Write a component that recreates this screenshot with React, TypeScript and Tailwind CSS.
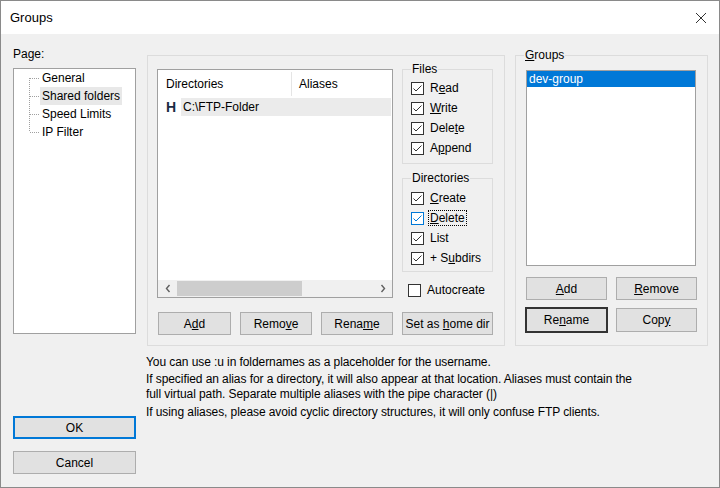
import React from 'react';

// Small pieces of a Windows 10 style dialog
const Btn = ({
  children,
  className = '',
  edge = 'border border-[#adadad]',
}: {
  children: React.ReactNode;
  className?: string;
  edge?: string;
}) => (
  <div className={`flex items-center justify-center bg-[#e1e1e1] text-[12px] leading-none ${edge} ${className}`}>
    {children}
  </div>
);

const CheckBox = ({ checked = true, hover = false }: { checked?: boolean; hover?: boolean }) => (
  <div
    className={`w-[13px] h-[13px] shrink-0 bg-white border ${hover ? 'border-[#0078d7]' : 'border-[#333333]'}`}
  >
    {checked && (
      <svg width="11" height="11" viewBox="0 0 11 11">
        <path
          d="M1.5 5.5 L4 8 L9.5 2.5"
          fill="none"
          stroke={hover ? '#0078d7' : '#333333'}
          strokeWidth="1"
        />
      </svg>
    )}
  </div>
);

const CheckRow = ({
  children,
  checked = true,
  hover = false,
  focus = false,
}: {
  children: React.ReactNode;
  checked?: boolean;
  hover?: boolean;
  focus?: boolean;
}) => (
  <div className="flex items-center h-[20px]">
    <CheckBox checked={checked} hover={hover} />
    <span
      className={`ml-[4px] text-[12px] leading-[14px] ${focus ? 'border border-dotted border-black px-[1px]' : 'px-[2px]'}`}
    >
      {children}
    </span>
  </div>
);

const GroupBox = ({
  label,
  className = '',
  children,
}: {
  label: React.ReactNode;
  className?: string;
  children: React.ReactNode;
}) => (
  <div className={`relative border border-[#dcdcdc] ${className}`}>
    <span className="absolute -top-[8px] left-[8px] bg-[#f0f0f0] px-[1px] text-[12px] leading-[14px]">
      {label}
    </span>
    {children}
  </div>
);

const TreeLines = () => (
  <svg width="26" height="72" viewBox="0 0 26 72" className="shrink-0">
    <g stroke="#a0a0a0" strokeWidth="1" strokeDasharray="1 1" fill="none">
      <line x1="15.5" y1="9" x2="15.5" y2="63" />
      <line x1="16" y1="9.5" x2="25" y2="9.5" />
      <line x1="16" y1="27.5" x2="25" y2="27.5" />
      <line x1="16" y1="45.5" x2="25" y2="45.5" />
      <line x1="16" y1="63.5" x2="25" y2="63.5" />
    </g>
  </svg>
);

const App = () => {
  return (
    <div className="w-[720px] h-[488px] bg-[#f0f0f0] border border-[#8a8a8a] flex flex-col font-['Liberation_Sans',Arial,sans-serif] text-black overflow-hidden">
      {/* title bar */}
      <div className="h-[33px] bg-white flex items-center justify-between shrink-0">
        <span className="pl-[9px] text-[13px]">Groups</span>
        <svg width="12" height="12" viewBox="0 0 12 12" className="mr-[12px]">
          <path d="M1 1 L11 11 M11 1 L1 11" stroke="#333" strokeWidth="1" />
        </svg>
      </div>

      <div className="flex flex-1">
        {/* left column */}
        <div className="ml-[12px] w-[123px] flex flex-col">
          <div className="mt-[13px] text-[12px] leading-[15px]">Page:</div>
          <div className="mt-[6px] h-[266px] bg-white border border-[#a0a0a0] flex">
            <TreeLines />
            <div className="flex flex-col text-[12px]">
              <div className="h-[18px] flex items-center px-[2px]">General</div>
              <div className="h-[18px] flex items-center px-[2px] bg-[#e8e8e8]">Shared folders</div>
              <div className="h-[18px] flex items-center px-[2px]">Speed Limits</div>
              <div className="h-[18px] flex items-center px-[2px]">IP Filter</div>
            </div>
          </div>
          <Btn className="mt-[82px] h-[23px]" edge="border-2 border-[#0078d7]">
            OK
          </Btn>
          <Btn className="mt-[12px] h-[23px]">Cancel</Btn>
        </div>

        {/* right part */}
        <div className="ml-[11px] flex flex-col">
          <div className="mt-[21px] flex">
            {/* shared folders frame */}
            <div className="w-[358px] h-[291px] border border-[#dcdcdc] flex pl-[9px] pt-[13px]">
              <div className="w-[236px] flex flex-col">
                <div className="h-[229px] bg-white border border-[#a0a0a0] flex flex-col">
                  <div className="h-[28px] flex text-[12px]">
                    <div className="w-[134px] flex items-center pl-[8px] border-r border-[#e5e5e5] my-[2px]">
                      Directories
                    </div>
                    <div className="flex items-center pl-[7px]">Aliases</div>
                  </div>
                  <div className="h-[18px] flex items-center text-[12px]">
                    <span className="w-[23px] pl-[8px] font-bold text-[14px] text-[#1c2b43]">H</span>
                    <span className="flex-1 h-full flex items-center bg-[#ebebeb] pl-[2px] mr-[1px]">
                      C:\FTP-Folder
                    </span>
                  </div>
                  <div className="flex-1" />
                  <div className="h-[17px] bg-[#f0f0f0] flex items-center">
                    <div className="w-[19px] flex justify-center">
                      <svg width="6" height="9" viewBox="0 0 6 9">
                        <path d="M4.5 1 L1.5 4.5 L4.5 8" fill="none" stroke="#606060" strokeWidth="1.4" />
                      </svg>
                    </div>
                    <div className="w-[125px] h-[15px] bg-[#cdcdcd]" />
                    <div className="flex-1" />
                    <div className="w-[19px] flex justify-center">
                      <svg width="6" height="9" viewBox="0 0 6 9">
                        <path d="M1.5 1 L4.5 4.5 L1.5 8" fill="none" stroke="#606060" strokeWidth="1.4" />
                      </svg>
                    </div>
                  </div>
                </div>
                <div className="mt-[14px] flex">
                  <Btn className="ml-[1px] w-[73px] h-[23px]">
                    <span>
                      A<u>d</u>d
                    </span>
                  </Btn>
                  <Btn className="ml-[9px] w-[72px] h-[23px]">
                    <span>
                      Remo<u>v</u>e
                    </span>
                  </Btn>
                  <Btn className="ml-[9px] w-[72px] h-[23px]">
                    <span>
                      Rena<u>m</u>e
                    </span>
                  </Btn>
                </div>
              </div>

              <div className="ml-[9px] w-[91px] flex flex-col">
                <GroupBox label="Files" className="h-[95px] pl-[8px] pt-[8px]">
                  <CheckRow>
                    R<u>e</u>ad
                  </CheckRow>
                  <CheckRow>
                    <u>W</u>rite
                  </CheckRow>
                  <CheckRow>
                    Dele<u>t</u>e
                  </CheckRow>
                  <CheckRow>
                    A<u>p</u>pend
                  </CheckRow>
                </GroupBox>
                <GroupBox label="Directories" className="mt-[14px] h-[94px] pl-[8px] pt-[9px]">
                  <CheckRow>
                    <u>C</u>reate
                  </CheckRow>
                  <CheckRow hover focus>
                    <u>D</u>elete
                  </CheckRow>
                  <CheckRow>List</CheckRow>
                  <CheckRow>
                    + S<u>u</u>bdirs
                  </CheckRow>
                </GroupBox>
                <div className="mt-[8px] pl-[6px]">
                  <CheckRow checked={false}>Autocreate</CheckRow>
                </div>
                <Btn className="mt-[12px] h-[23px]">
                  <span>
                    Set as <u>h</u>ome dir
                  </span>
                </Btn>
              </div>
            </div>

            {/* groups box */}
            <GroupBox
              label={
                <span>
                  <u>G</u>roups
                </span>
              }
              className="ml-[10px] w-[193px] h-[291px] pl-[10px] pt-[14px]"
            >
              <div className="w-[170px] h-[196px] bg-white border border-[#a0a0a0]">
                <div className="h-[16px] bg-[#0078d7] text-white text-[12px] flex items-center pl-[2px]">
                  dev-group
                </div>
              </div>
              <div className="mt-[11px] flex">
                <Btn className="w-[81px] h-[23px]">
                  <span>
                    <u>A</u>dd
                  </span>
                </Btn>
                <Btn className="ml-[9px] w-[81px] h-[23px]">
                  <span>
                    <u>R</u>emove
                  </span>
                </Btn>
              </div>
              <div className="mt-[7px] flex items-center">
                <Btn className="-ml-[1px] w-[83px] h-[26px]" edge="border-2 border-[#333333]">
                  <span>
                    Re<u>n</u>ame
                  </span>
                </Btn>
                <Btn className="ml-[8px] w-[81px] h-[24px]">
                  <span>
                    Cop<u>y</u>
                  </span>
                </Btn>
              </div>
            </GroupBox>
          </div>

          {/* hints */}
          <div className="mt-[9px] text-[12px] leading-[15px] tracking-[-0.08px] -ml-[1px]">
            <p>You can use :u in foldernames as a placeholder for the username.</p>
            <p className="mt-[2px]">
              If specified an alias for a directory, it will also appear at that location. Aliases must contain the
              <br />
              full virtual path. Separate multiple aliases with the pipe character (|)
            </p>
            <p className="mt-[3px]">
              If using aliases, please avoid cyclic directory structures, it will only confuse FTP clients.
            </p>
          </div>
        </div>
      </div>
    </div>
  );
};

export default App;
